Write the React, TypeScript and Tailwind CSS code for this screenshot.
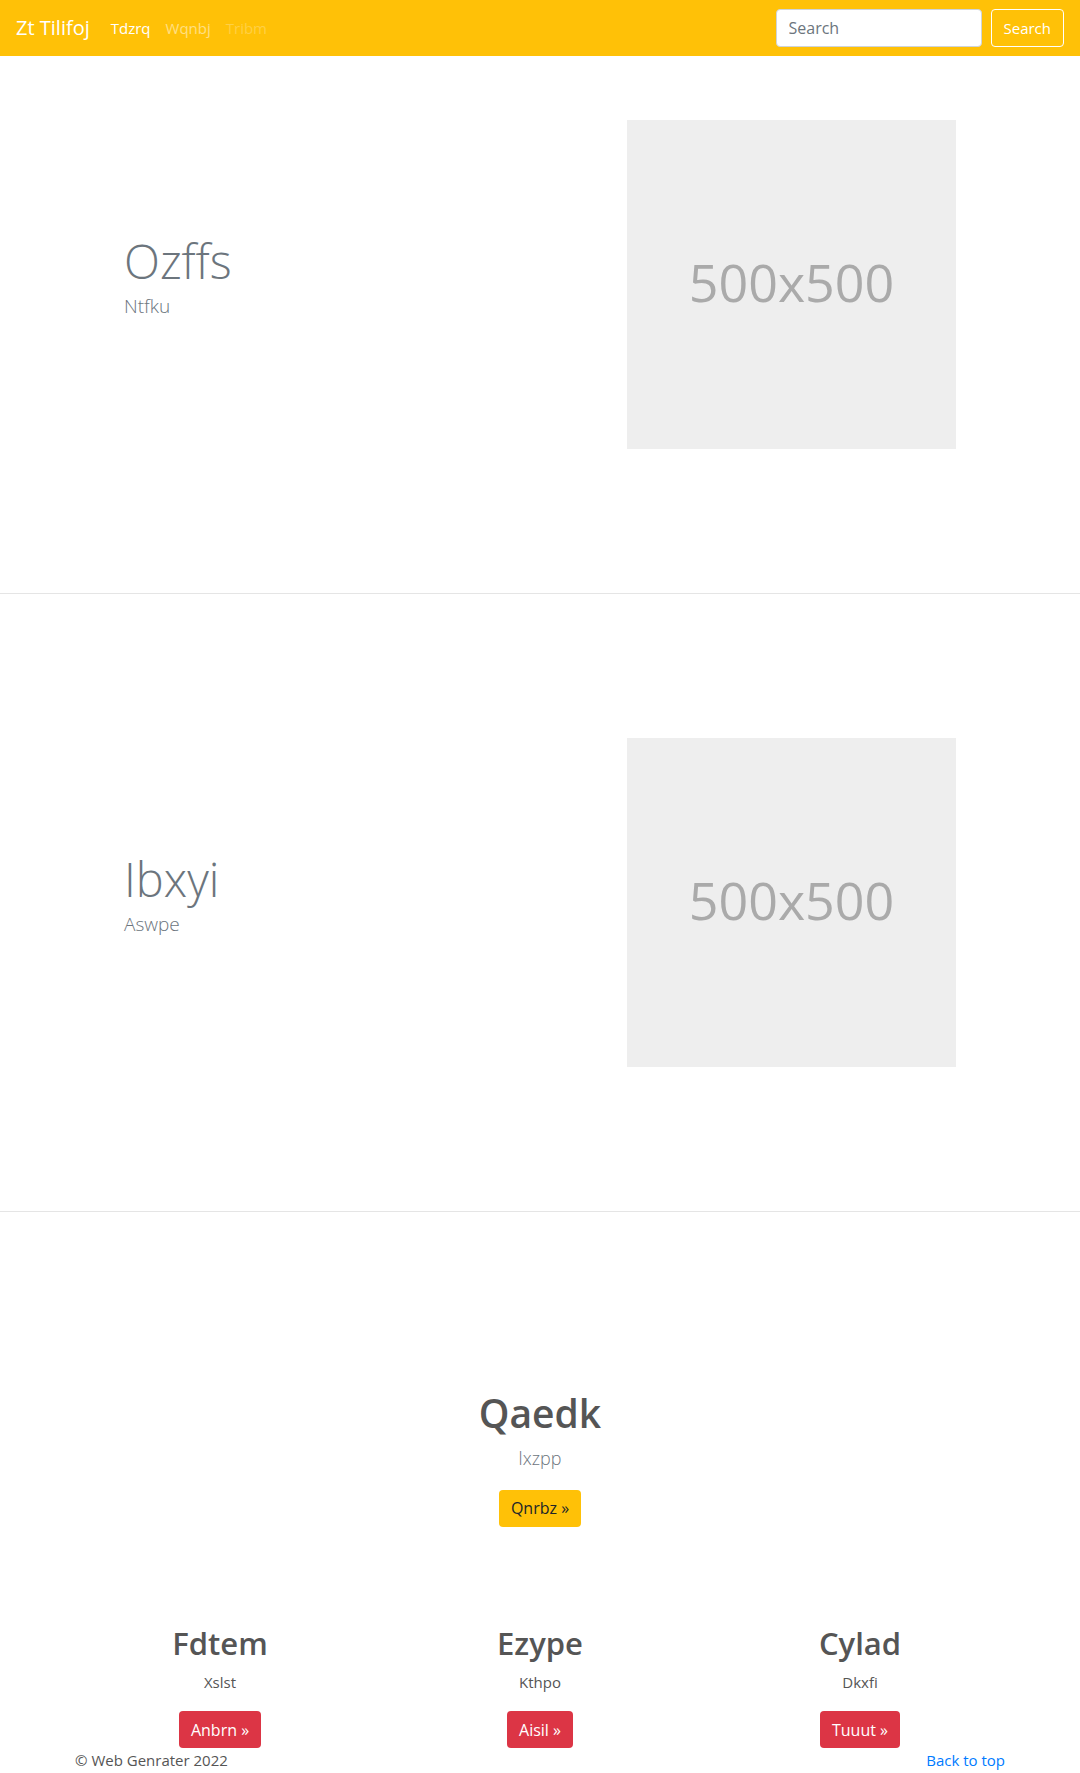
const font = { fontFamily: '"Open Sans", "Noto Sans", Arial, sans-serif' };

function Placeholder() {
  return (
    <div className="flex h-[329px] w-[329px] shrink-0 items-center justify-center bg-[#eeeeee] pb-[6px]">
      <span className="text-[52px] leading-none text-[#aaaaaa]">500x500</span>
    </div>
  );
}

function Featurette({ title, lead, top }: { title: string; lead: string; top: string }) {
  return (
    <section className={`flex items-center justify-between border-b border-[#e5e5e5] px-[124px] pb-[144px] ${top}`}>
      <div className="pb-[16px]">
        <h1 className="text-[47px] font-light leading-[1.2] text-[#6c757d]">{title}</h1>
        <p className="mt-[4px] text-[19px] font-light leading-[1.4] text-[#6c757d]">{lead}</p>
      </div>
      <Placeholder />
    </section>
  );
}

const columns = [
  { title: "Fdtem", text: "Xslst", cta: "Anbrn" },
  { title: "Ezype", text: "Kthpo", cta: "Aisil" },
  { title: "Cylad", text: "Dkxfi", cta: "Tuuut" },
];

export default function App() {
  return (
    <div style={font} className="min-h-[1773px] bg-white text-[#212529]">
      <nav className="flex h-[56px] items-center bg-[#ffc107] pl-4 pr-4">
        <span className="mr-[21px] text-[20px] leading-none text-white">Zt Tilifoj</span>
        <div className="flex items-center gap-[15px] text-[15px]">
          <a className="text-white">Tdzrq</a>
          <a className="text-white/50">Wqnbj</a>
          <a className="text-white/25">Tribm</a>
        </div>
        <div className="ml-auto flex items-center gap-[9px]">
          <input
            placeholder="Search"
            className="h-[38px] w-[206px] rounded-[4px] border border-[#ced4da] bg-white px-3 text-[16px] text-[#495057] placeholder:text-[#6c757d] outline-none"
          />
          <button className="h-[38px] rounded-[4px] border border-white px-3 text-[15px] text-white">Search</button>
        </div>
      </nav>

      <Featurette title="Ozffs" lead="Ntfku" top="pt-[64px]" />
      <Featurette title="Ibxyi" lead="Aswpe" top="pt-[144px]" />

      <section className="pt-[178px]">
        <div className="flex flex-col items-center">
          <h2 className="text-[39px] font-semibold leading-[1.2] text-[#555555]">Qaedk</h2>
          <p className="mt-[8px] text-[18px] font-light text-[#6c757d]">lxzpp</p>
          <button className="mt-[18px] h-[37px] rounded-[4px] bg-[#ffc107] px-3 text-[16px] text-[#212529]">Qnrbz »</button>
        </div>

        <div className="mx-auto mt-[98px] grid w-[960px] grid-cols-3">
          {columns.map((c) => (
            <div key={c.title} className="flex flex-col items-center">
              <h3 className="text-[31px] font-semibold leading-[1.2] text-[#555555]">{c.title}</h3>
              <p className="mt-[9px] text-[15px] text-[#555555]">{c.text}</p>
              <button className="mt-[18px] h-[37px] rounded-[4px] bg-[#dc3545] px-3 text-[16px] text-white">{c.cta} »</button>
            </div>
          ))}
        </div>

        <footer className="mx-auto flex w-[960px] justify-between px-[15px] text-[15px] leading-[24px]">
          <p className="text-[#555555]">© Web Genrater 2022</p>
          <a className="text-[#007bff]">Back to top</a>
        </footer>
      </section>
    </div>
  );
}
